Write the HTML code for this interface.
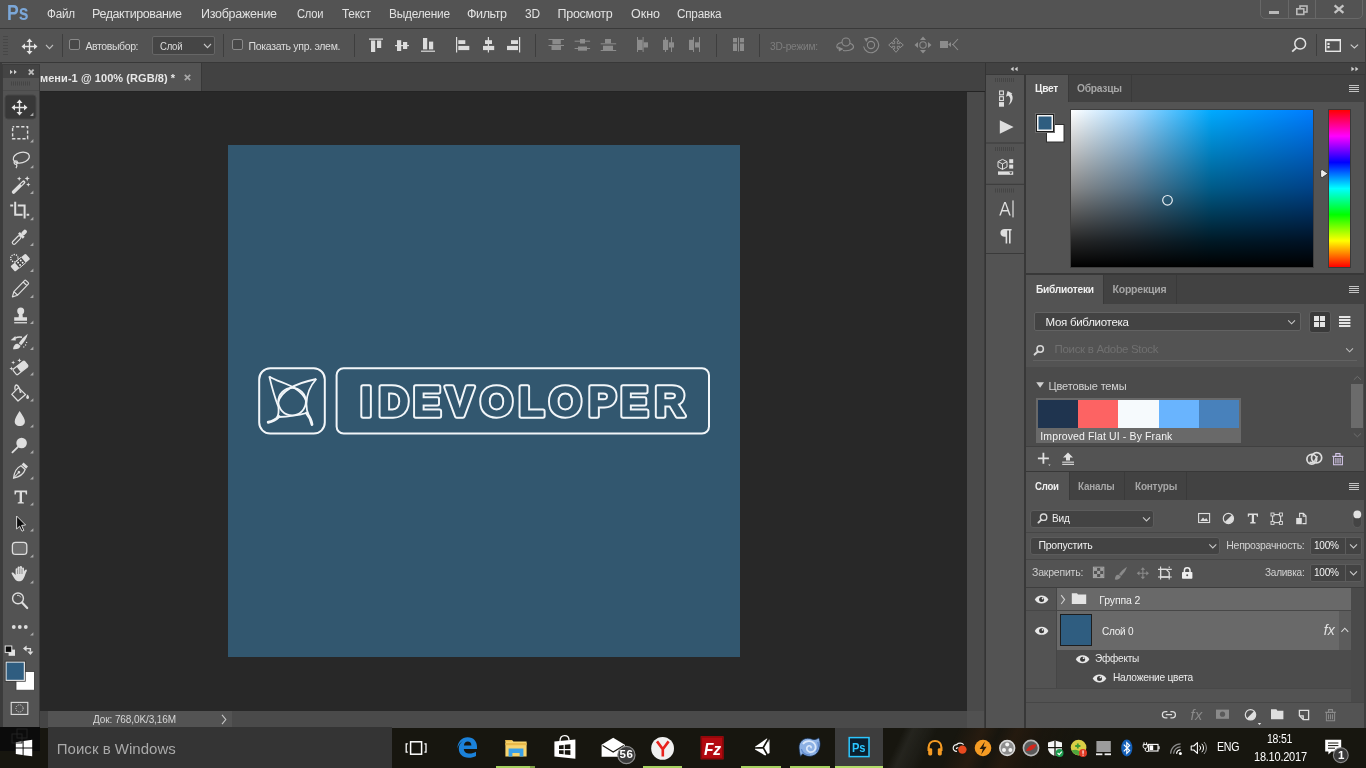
<!DOCTYPE html>
<html lang="ru">
<head>
<meta charset="utf-8">
<title>Photoshop</title>
<style>
*{box-sizing:border-box;margin:0;padding:0}
html,body{width:1366px;height:768px;overflow:hidden;background:#282828}
body{font-family:"Liberation Sans",sans-serif;font-size:11px;color:#dcdcdc;position:relative}
.a{position:absolute}
.t{position:absolute;white-space:nowrap;line-height:1}
svg{position:absolute;overflow:visible}
/* main regions */
#menubar{left:0;top:0;width:1366px;height:29px;background:#535353;border-bottom:1px solid #3a3a3a}
#optbar{left:0;top:29px;width:1366px;height:34px;background:#535353;border-bottom:1px solid #383838}
#tabbar{left:0;top:63px;width:985px;height:29px;background:#424242;border-bottom:1px solid #242424}
#doctab{left:0;top:63px;width:202px;height:28px;background:#535353;border-right:1px solid #383838}
#canvasarea{left:0;top:92px;width:967px;height:619px;background:#282828}
#vscroll{left:967px;top:92px;width:18px;height:619px;background:#4a4a4a}
#statusbar{left:0;top:711px;width:985px;height:17px;background:#4a4a4a}
#statusinfo{left:48px;top:711px;width:184px;height:17px;background:#535353}
#doc{left:228px;top:145px;width:512px;height:512px;background:#32576f}
#toolbox{left:2px;top:64px;width:38px;height:664px;background:#535353;border:1px solid #3c3c3c}
#dockwrap{left:985px;top:63px;width:381px;height:665px;background:#3a3a3a}
#root{position:absolute;left:0;top:0;width:1366px;height:768px;will-change:transform}
#taskbar{left:0;top:728px;width:1366px;height:40px;background:#17160f}
</style>
</head>
<body>
<div id="root">
<div class="a" id="menubar"></div>
<div class="a" id="optbar"></div>
<div class="a" id="tabbar"></div>
<div class="a" id="doctab"></div>
<div class="a" id="canvasarea"></div>
<div class="a" id="doc"></div>
<div class="a" id="vscroll"></div>
<div class="a" id="statusbar"></div>
<div class="a" id="statusinfo"></div>
<div class="a" id="toolbox"></div>
<div class="a" id="dockwrap"></div>
<div class="a" id="taskbar"></div>
<span class="t" style="left:6.5px;top:2px;font-size:22px;color:#7ba7d8;font-weight:bold;transform:scaleX(0.80);transform-origin:0 0;">Ps</span>
<span class="t" style="left:47px;top:8px;font-size:12.5px;color:#e2e2e2;letter-spacing:-0.25px;transform:scaleX(0.9339);transform-origin:0 0;">Файл</span>
<span class="t" style="left:92px;top:8px;font-size:12.5px;color:#e2e2e2;letter-spacing:-0.40px;">Редактирование</span>
<span class="t" style="left:201px;top:8px;font-size:12.5px;color:#e2e2e2;letter-spacing:-0.27px;">Изображение</span>
<span class="t" style="left:297px;top:8px;font-size:12.5px;color:#e2e2e2;letter-spacing:-0.25px;transform:scaleX(0.8939);transform-origin:0 0;">Слои</span>
<span class="t" style="left:342px;top:8px;font-size:12.5px;color:#e2e2e2;letter-spacing:-0.25px;transform:scaleX(0.9517);transform-origin:0 0;">Текст</span>
<span class="t" style="left:388.5px;top:8px;font-size:12.5px;color:#e2e2e2;letter-spacing:-0.25px;transform:scaleX(0.9496);transform-origin:0 0;">Выделение</span>
<span class="t" style="left:467px;top:8px;font-size:12.5px;color:#e2e2e2;letter-spacing:-0.40px;">Фильтр</span>
<span class="t" style="left:525px;top:8px;font-size:12.5px;color:#e2e2e2;letter-spacing:-0.25px;transform:scaleX(0.9536);transform-origin:0 0;">3D</span>
<span class="t" style="left:557.5px;top:8px;font-size:12.5px;color:#e2e2e2;letter-spacing:-0.27px;">Просмотр</span>
<span class="t" style="left:631px;top:8px;font-size:12.5px;color:#e2e2e2;letter-spacing:-0.02px;">Окно</span>
<span class="t" style="left:677px;top:8px;font-size:12.5px;color:#e2e2e2;letter-spacing:-0.25px;transform:scaleX(0.9382);transform-origin:0 0;">Справка</span>
<div class="a" style="left:1260px;top:-2px;width:103px;height:21px;background:transparent;border:1px solid #686868;border-radius:0 0 5px 5px;"></div>
<div class="a" style="left:1288px;top:0px;width:1px;height:18px;background:#686868;"></div>
<div class="a" style="left:1315px;top:0px;width:1px;height:18px;background:#686868;"></div>
<div class="a" style="left:1269px;top:11px;width:10px;height:3px;background:#b9b9b9;"></div>
<svg style="left:1295px;top:4px;" width="14" height="12" viewBox="0 0 14 12"><rect x="5" y="2" width="7" height="6" fill="none" stroke="#b9b9b9" stroke-width="1.6"/><rect x="1.8" y="4.8" width="7" height="5.6" fill="#535353" stroke="#b9b9b9" stroke-width="1.6"/></svg>
<svg style="left:1333px;top:4px;" width="12" height="10" viewBox="0 0 12 10"><path d="M1.6 1.4 L10.4 8.8 M10.4 1.4 L1.6 8.8" stroke="#c4c4c4" stroke-width="2.3" fill="none"/></svg>

<div class="a" style="left:3px;top:36px;width:5px;height:20px;background:transparent;background-image:repeating-linear-gradient(to bottom,#474747 0 1px,transparent 1px 3px);"></div>
<svg style="left:21px;top:38px;" width="17" height="17" viewBox="0 0 17 17"><path d="M8.5 0.5 L11.5 4 H9.2 V7.8 H13 V5.5 L16.5 8.5 L13 11.5 V9.2 H9.2 V13 H11.5 L8.5 16.5 L5.5 13 H7.8 V9.2 H4 V11.5 L0.5 8.5 L4 5.5 V7.8 H7.8 V4 H5.5 Z" fill="#e4e4e4"/></svg>
<svg style="left:45px;top:44px;" width="9" height="6" viewBox="0 0 9 6"><path d="M1 1 L4.5 4.6 L8 1" fill="none" stroke="#bdbdbd" stroke-width="1.1"/></svg>
<div class="a" style="left:62px;top:34px;width:1px;height:23px;background:#3e3e3e;"></div>
<div class="a" style="left:69px;top:39px;width:11px;height:11px;background:#484848;border:1px solid #8a8a8a;border-radius:2px;"></div>
<span class="t" style="left:85.5px;top:41px;font-size:10.5px;color:#dcdcdc;letter-spacing:-0.40px;">Автовыбор:</span>
<div class="a" style="left:152px;top:36px;width:63px;height:19px;background:#454545;border:1px solid #666;border-radius:2px;"></div>
<span class="t" style="left:160px;top:41px;font-size:10.5px;color:#dcdcdc;letter-spacing:-0.25px;transform:scaleX(0.9079);transform-origin:0 0;">Слой</span>
<svg style="left:203px;top:43px;" width="9" height="6" viewBox="0 0 9 6"><path d="M1 1 L4.5 4.6 L8 1" fill="none" stroke="#c8c8c8" stroke-width="1.1"/></svg>
<div class="a" style="left:223px;top:34px;width:1px;height:23px;background:#3e3e3e;"></div>
<div class="a" style="left:232px;top:39px;width:11px;height:11px;background:#484848;border:1px solid #8a8a8a;border-radius:2px;"></div>
<span class="t" style="left:248.5px;top:41px;font-size:10.5px;color:#dcdcdc;letter-spacing:-0.30px;">Показать упр. элем.</span>
<div class="a" style="left:354px;top:34px;width:1px;height:23px;background:#3e3e3e;"></div>
<svg style="left:0px;top:0px;" width="1366" height="64" viewBox="0 0 1366 64"><rect x="369" y="38.5" width="14" height="1.2" fill="#dcdcdc"/><rect x="371" y="40.5" width="4.2" height="11.5" fill="#dcdcdc"/><rect x="377" y="40.5" width="4.2" height="7.5" fill="#dcdcdc"/><rect x="395" y="45" width="14" height="1.2" fill="#dcdcdc"/><rect x="397" y="40.2" width="4.2" height="10.8" fill="#dcdcdc"/><rect x="403" y="42" width="4.2" height="7" fill="#dcdcdc"/><rect x="421" y="50.6" width="14" height="1.2" fill="#dcdcdc"/><rect x="423" y="38" width="4.2" height="11.4" fill="#dcdcdc"/><rect x="429" y="41.6" width="4.2" height="7.8" fill="#dcdcdc"/><rect x="456" y="37" width="1.2" height="15.5" fill="#dcdcdc"/><rect x="458.3" y="40.2" width="7" height="3.8" fill="#dcdcdc"/><rect x="458.3" y="45.9" width="11" height="4.2" fill="#dcdcdc"/><rect x="487.8" y="37" width="1.2" height="15.5" fill="#dcdcdc"/><rect x="485" y="40.2" width="7" height="3.8" fill="#dcdcdc"/><rect x="483" y="45.9" width="11.2" height="4.2" fill="#dcdcdc"/><rect x="519" y="37" width="1.2" height="15.5" fill="#dcdcdc"/><rect x="511" y="40.2" width="7" height="3.8" fill="#dcdcdc"/><rect x="507" y="45.9" width="11" height="4.2" fill="#dcdcdc"/><rect x="548.5" y="39" width="15.5" height="1" fill="#8c8c8c"/><rect x="548.5" y="45" width="15.5" height="1" fill="#8c8c8c"/><rect x="552.4" y="40" width="8.4" height="4.3" fill="#8c8c8c"/><rect x="551.5" y="46" width="9.5" height="4" fill="#8c8c8c"/><rect x="574.6" y="40.7" width="15.5" height="1" fill="#8c8c8c"/><rect x="574.6" y="48" width="15.5" height="1" fill="#8c8c8c"/><rect x="580" y="39" width="5" height="4.5" fill="#8c8c8c"/><rect x="578" y="46.5" width="9" height="4.2" fill="#8c8c8c"/><rect x="600.7" y="43.3" width="15.5" height="1" fill="#8c8c8c"/><rect x="600.7" y="50" width="15.5" height="1" fill="#8c8c8c"/><rect x="605" y="39" width="6" height="4.3" fill="#8c8c8c"/><rect x="603" y="45.7" width="10" height="4.3" fill="#8c8c8c"/><rect x="637" y="37" width="1" height="15" fill="#8c8c8c"/><rect x="642.6" y="37" width="1" height="15" fill="#8c8c8c"/><rect x="638" y="39.8" width="4.6" height="10.2" fill="#8c8c8c"/><rect x="643.6" y="42.3" width="4.4" height="5.2" fill="#8c8c8c"/><rect x="665" y="37" width="1" height="15" fill="#8c8c8c"/><rect x="671" y="37" width="1" height="15" fill="#8c8c8c"/><rect x="663" y="39.8" width="5.2" height="10.2" fill="#8c8c8c"/><rect x="669" y="42.3" width="5" height="5.2" fill="#8c8c8c"/><rect x="693" y="37" width="1" height="15" fill="#8c8c8c"/><rect x="699" y="37" width="1" height="15" fill="#8c8c8c"/><rect x="689" y="39.8" width="4.2" height="10.2" fill="#8c8c8c"/><rect x="695" y="42.3" width="4" height="5.2" fill="#8c8c8c"/><rect x="738" y="37.5" width="1" height="14" fill="#8c8c8c"/><rect x="733" y="38" width="4" height="4.3" fill="#8c8c8c"/><rect x="733" y="43.5" width="4" height="7.5" fill="#8c8c8c"/><rect x="740" y="38" width="4" height="4.3" fill="#8c8c8c"/><rect x="740" y="43.5" width="4" height="7.5" fill="#8c8c8c"/></svg>
<div class="a" style="left:535px;top:34px;width:1px;height:23px;background:#3e3e3e;"></div>
<div class="a" style="left:716px;top:34px;width:1px;height:23px;background:#3e3e3e;"></div>
<div class="a" style="left:759px;top:34px;width:1px;height:23px;background:#3e3e3e;"></div>
<span class="t" style="left:770px;top:41px;font-size:10.5px;color:#7e7e7e;letter-spacing:-0.25px;transform:scaleX(0.9696);transform-origin:0 0;">3D-режим:</span>
<svg style="left:835px;top:37px;" width="20" height="15" viewBox="0 0 20 15"><circle cx="11" cy="5" r="4" fill="none" stroke="#8c8c8c" stroke-width="1.1"/><path d="M7 5.5 C2 6 0.5 9 3 11.5 M8 13.5 C13 14.5 19 12.5 18.5 9.5 C18.3 8 17 7 15 6.3" fill="none" stroke="#8c8c8c" stroke-width="1.1"/><path d="M3 9.5 L8.5 12 L4 14.5 Z" fill="#8c8c8c"/></svg>
<svg style="left:862px;top:36px;" width="18" height="18" viewBox="0 0 18 18"><circle cx="9" cy="9" r="3.6" fill="none" stroke="#8c8c8c" stroke-width="1.1"/><path d="M4.5 3 A7.6 7.6 0 1 1 1.6 10.5" fill="none" stroke="#8c8c8c" stroke-width="1.1"/><path d="M2 2.2 L6.2 2.2 L4.4 6 Z" fill="#8c8c8c"/></svg>
<svg style="left:888px;top:37px;" width="16" height="16" viewBox="0 0 16 16"><path d="M8 0.7 L11 4.2 H9.3 V6.7 H11.8 V5 L15.3 8 L11.8 11 V9.3 H9.3 V11.8 H11 L8 15.3 L5 11.8 H6.7 V9.3 H4.2 V11 L0.7 8 L4.2 5 V6.7 H6.7 V4.2 H5 Z" fill="none" stroke="#8c8c8c" stroke-width="1"/></svg>
<svg style="left:914px;top:36px;" width="18" height="18" viewBox="0 0 18 18"><circle cx="9" cy="9" r="3.2" fill="none" stroke="#8c8c8c" stroke-width="1.1"/><path d="M9 0.5 L12 4 H6 Z M9 17.5 L12 14 H6 Z M0.5 9 L4 6 V12 Z M17.5 9 L14 6 V12 Z" fill="#8c8c8c"/></svg>
<svg style="left:940px;top:38px;" width="19" height="14" viewBox="0 0 19 14"><rect x="0" y="3" width="8" height="7" fill="#8c8c8c"/><path d="M8 6.5 L11 4 V9 Z" fill="#8c8c8c"/><path d="M18 1 L13 6.5 L18 12 M13 6.5 H12" fill="none" stroke="#8c8c8c" stroke-width="1.1"/></svg>
<svg style="left:1291px;top:37px;" width="17" height="17" viewBox="0 0 17 17"><circle cx="9.2" cy="6.7" r="5.4" fill="none" stroke="#e2e2e2" stroke-width="1.5"/><path d="M5.3 10.8 L1.2 14.6" stroke="#e2e2e2" stroke-width="1.8" fill="none"/></svg>
<div class="a" style="left:1316px;top:34px;width:1px;height:22px;background:#3e3e3e;"></div>
<svg style="left:1325px;top:39px;" width="16" height="13" viewBox="0 0 16 13"><rect x="0.7" y="0.7" width="14.6" height="11.6" fill="none" stroke="#e6e6e6" stroke-width="1.4"/><rect x="0" y="0" width="16" height="2.2" fill="#e6e6e6"/><rect x="2.4" y="3.8" width="2.2" height="2.2" fill="#e6e6e6"/><rect x="2.4" y="7" width="2.2" height="2.2" fill="#e6e6e6"/></svg>
<svg style="left:1350px;top:44px;" width="9" height="5" viewBox="0 0 9 5"><path d="M0.7 0.6 L4.4 4 L8.1 0.6" fill="none" stroke="#cfcfcf" stroke-width="1.1"/></svg>

<span class="t" style="left:40px;top:73px;font-size:11px;color:#e8e8e8;font-weight:bold;letter-spacing:0.06px;">мени-1 @ 100% (RGB/8) *</span>
<svg style="left:184px;top:74px;" width="7" height="7" viewBox="0 0 7 7"><path d="M0.8 0.8 L6.2 6.2 M6.2 0.8 L0.8 6.2" stroke="#a8a8a8" stroke-width="1.7" fill="none"/></svg>
<span class="t" style="left:93px;top:715px;font-size:10px;color:#d6d6d6;letter-spacing:-0.10px;">Док: 768,0K/3,16M</span>
<svg style="left:221px;top:714px;" width="6" height="11" viewBox="0 0 6 11"><path d="M1 0.8 L4.8 5.5 L1 10.2" fill="none" stroke="#c8c8c8" stroke-width="1.1"/></svg>
<div class="a" style="left:40px;top:711px;width:8px;height:17px;background:#454545;"></div>
<div class="a" style="left:967px;top:711px;width:17px;height:17px;background:#515151;"></div>
<div class="a" style="left:984px;top:92px;width:1px;height:636px;background:#3c3c3c;"></div>

<svg style="left:0px;top:0px;" width="1366" height="768" viewBox="0 0 1366 768"><rect x="259.2" y="368.2" width="65.6" height="65.4" rx="11" fill="none" stroke="#f2f6f9" stroke-width="2"/><rect x="336.6" y="368.2" width="372.4" height="65.4" rx="7" fill="none" stroke="#f2f6f9" stroke-width="2"/><g fill="none" stroke="#f2f6f9" stroke-width="1.8" stroke-linejoin="miter"><circle cx="292.1" cy="401.6" r="13.8"/><path d="M269.3 376.4 C280 383.5 300 385 306.3 401"/><path d="M316.3 379 C302 382 282 388 278.3 402"/><path d="M269.3 376.4 C272 388 275 398 278.4 407 C279 412 278.6 415 277 417.5"/><path d="M316.3 379 C310 386 306.5 396 306.4 404 C306.4 409 307.2 412 308.5 414.5"/><path d="M278.5 417 C288 416.8 298 415.5 306.5 413"/></g><path d="M268.3 422.3 C272.5 421.5 276 419.5 279 416.5" fill="none" stroke="#f2f6f9" stroke-width="3" stroke-linecap="round"/><path d="M306.5 413 C309.5 416.5 311.3 420.5 312 424.5" fill="none" stroke="#f2f6f9" stroke-width="2.8" stroke-linecap="round"/><g font-family="Liberation Sans, sans-serif" font-weight="bold" font-size="42" text-anchor="middle" stroke-linejoin="round"><g fill="#f2f6f9" stroke="#f2f6f9" stroke-width="5.4"><text x="366.2" y="415.5">I</text><text x="393.65" y="415.5">D</text><text x="427" y="415.5">E</text><text x="459.8" y="415.5">V</text><text x="496.5" y="415.5">O</text><text x="531.4" y="415.5">L</text><text x="565.4" y="415.5">O</text><text x="602.2" y="415.5">P</text><text x="634.2" y="415.5">E</text><text x="670" y="415.5">R</text></g><g fill="#32576f" stroke="#32576f" stroke-width="1.5"><text x="366.2" y="415.5">I</text><text x="393.65" y="415.5">D</text><text x="427" y="415.5">E</text><text x="459.8" y="415.5">V</text><text x="496.5" y="415.5">O</text><text x="531.4" y="415.5">L</text><text x="565.4" y="415.5">O</text><text x="602.2" y="415.5">P</text><text x="634.2" y="415.5">E</text><text x="670" y="415.5">R</text></g></g></svg>

<div class="a" style="left:0px;top:63px;width:2px;height:665px;background:#3b3b3b;"></div>
<div class="a" style="left:3px;top:65px;width:36px;height:13px;background:#444444;"></div>
<svg style="left:0px;top:0px;" width="1366" height="768" viewBox="0 0 1366 768"><path d="M10 69.8 L12.8 72 L10 74.2 Z M14 69.8 L16.8 72 L14 74.2 Z" fill="#cfcfcf"/><path d="M28.8 69.6 L33.6 74.6 M33.6 69.6 L28.8 74.6" stroke="#bdbdbd" stroke-width="1.8" fill="none"/><rect x="11" y="81.5" width="1" height="4" fill="#454545"/><rect x="13" y="81.5" width="1" height="4" fill="#454545"/><rect x="15" y="81.5" width="1" height="4" fill="#454545"/><rect x="17" y="81.5" width="1" height="4" fill="#454545"/><rect x="19" y="81.5" width="1" height="4" fill="#454545"/><rect x="21" y="81.5" width="1" height="4" fill="#454545"/><rect x="23" y="81.5" width="1" height="4" fill="#454545"/><rect x="25" y="81.5" width="1" height="4" fill="#454545"/><rect x="27" y="81.5" width="1" height="4" fill="#454545"/><rect x="29" y="81.5" width="1" height="4" fill="#454545"/><rect x="3" y="90" width="36" height="1" fill="#4b4b4b"/><rect x="5" y="95" width="31" height="24" rx="3" fill="#383838" stroke="#464646" stroke-width="1"/><path transform="translate(11,99)" d="M8.5 0.5 L11.5 4 H9.2 V7.8 H13 V5.5 L16.5 8.5 L13 11.5 V9.2 H9.2 V13 H11.5 L8.5 16.5 L5.5 13 H7.8 V9.2 H4 V11.5 L0.5 8.5 L4 5.5 V7.8 H7.8 V4 H5.5 Z" fill="#e6e6e6"/><path d="M33.4 112.6 L33.4 116 L30.0 116 Z" fill="#a9a9a9"/><rect x="12.6" y="126.7" width="15" height="12" fill="none" stroke="#dedede" stroke-width="1.4" stroke-dasharray="3.2 1.9" stroke-dashoffset="1.6"/><path d="M33.4 139.0 L33.4 142.4 L30.0 142.4 Z" fill="#a9a9a9"/><g fill="none" stroke="#dedede" stroke-width="1.3"><ellipse cx="21.3" cy="157.6" rx="8.2" ry="5.2" transform="rotate(-14 21.3 157.6)"/><circle cx="15.8" cy="162.6" r="1.7"/><path d="M16.3 164.2 C17.2 165.5 17 167 16 168.2"/></g><path d="M33.4 164.9 L33.4 168.3 L30.0 168.3 Z" fill="#a9a9a9"/><path d="M13.6 192 L23.6 182.2" stroke="#dedede" stroke-width="3.6" stroke-linecap="round" fill="none"/><path d="M21.3 184.5 L23.2 182.6" stroke="#555" stroke-width="1.2" stroke-linecap="round"/><path d="M19.2 176.39999999999998 L19.843999999999998 178.05599999999998 L21.5 178.7 L19.843999999999998 179.344 L19.2 181.0 L18.556 179.344 L16.9 178.7 L18.556 178.05599999999998 Z" fill="#dedede"/><path d="M27.2 176.0 L27.928 177.87199999999999 L29.8 178.6 L27.928 179.328 L27.2 181.2 L26.471999999999998 179.328 L24.599999999999998 178.6 L26.471999999999998 177.87199999999999 Z" fill="#dedede"/><path d="M28.3 182.4 L28.916 183.98399999999998 L30.5 184.6 L28.916 185.216 L28.3 186.79999999999998 L27.684 185.216 L26.1 184.6 L27.684 183.98399999999998 Z" fill="#dedede"/><path d="M33.4 190.6 L33.4 194 L30.0 194 Z" fill="#a9a9a9"/><g fill="none" stroke="#dedede" stroke-width="2"><path d="M10.2 205.6 H13.2 M15.2 201.8 V214.8 H22.6"/><path d="M17.8 205.6 H24.6 V218.4 M26.6 214.8 H29.2"/></g><path d="M33.4 216.79999999999998 L33.4 220.2 L30.0 220.2 Z" fill="#a9a9a9"/><g transform="rotate(45 19.5 237)"><rect x="17.9" y="236" width="3.4" height="10.5" rx="1.6" fill="none" stroke="#dedede" stroke-width="1.2"/><rect x="16.2" y="233.2" width="6.8" height="2.6" fill="#dedede"/><rect x="17.6" y="227.5" width="4" height="6" rx="1.8" fill="#dedede"/></g><path d="M33.4 242.6 L33.4 246 L30.0 246 Z" fill="#a9a9a9"/><g transform="rotate(-40 20.3 262.6)"><rect x="10.4" y="259" width="19.8" height="7.2" rx="1.2" fill="#dedede"/><rect x="16.2" y="259" width="8.2" height="7.2" fill="#4a4a4a"/><path d="M16.2 259 H24.4 M16.2 266.2 H24.4" stroke="#dedede" stroke-width="0.9"/><circle cx="18.6" cy="261.2" r="0.95" fill="#f4f4f4"/><circle cx="22" cy="261.2" r="0.95" fill="#f4f4f4"/><circle cx="18.6" cy="264.2" r="0.95" fill="#f4f4f4"/><circle cx="22" cy="264.2" r="0.95" fill="#f4f4f4"/></g><circle cx="14.4" cy="258.2" r="3.7" fill="none" stroke="#f0f0f0" stroke-width="1.3" stroke-dasharray="1.2 1.12"/><path d="M33.4 268.6 L33.4 272 L30.0 272 Z" fill="#a9a9a9"/><g transform="rotate(-46 19.7 289.3)"><path d="M9.2 289.3 L14 286.7 H29.3 Q30.4 286.7 30.4 287.8 V290.8 Q30.4 291.9 29.3 291.9 H14 Z M14 286.7 V291.9 M27.4 286.7 V291.9" fill="none" stroke="#dedede" stroke-width="1.2" stroke-linejoin="round"/></g><path d="M33.4 294.6 L33.4 298 L30.0 298 Z" fill="#a9a9a9"/><circle cx="20.7" cy="311" r="3.5" fill="#dedede"/><path d="M19 313 H22.4 L22.8 317.3 H27 V320.8 H14.2 V317.3 H18.6 Z" fill="#dedede"/><rect x="14.2" y="322.1" width="12.8" height="1.3" fill="#dedede"/><path d="M33.4 320.6 L33.4 324 L30.0 324 Z" fill="#a9a9a9"/><path d="M27.8 333.8 C24 336.6 21 340 18.8 343.2 L21.2 345.2 C24 342 26.8 338.4 27.8 333.8 Z" fill="#dedede"/><path d="M18.2 344 C15.6 343.2 13.6 345.2 13 349.2 C16.6 349.8 20 348.6 20.6 345.8 Z" fill="#dedede"/><path d="M10.6 340.2 L15.4 336 L15.8 340.4 Z" fill="#dedede"/><path d="M15 338.2 C17.4 337 20 336.8 22 337.2" fill="none" stroke="#dedede" stroke-width="1.4"/><circle cx="26.6" cy="342.4" r="0.7" fill="#dedede"/><circle cx="25.6" cy="345" r="0.7" fill="#dedede"/><circle cx="23.8" cy="347" r="0.7" fill="#dedede"/><path d="M33.4 346.6 L33.4 350 L30.0 350 Z" fill="#a9a9a9"/><g transform="rotate(-38 20.5 368)"><rect x="13.2" y="364.4" width="14.6" height="7" rx="1.2" fill="none" stroke="#dedede" stroke-width="1.2"/><rect x="18.2" y="364.4" width="9.6" height="7" rx="1.2" fill="#dedede"/></g><path d="M13.2 360.4 L13.788 361.912 L15.299999999999999 362.5 L13.788 363.088 L13.2 364.6 L12.611999999999998 363.088 L11.1 362.5 L12.611999999999998 361.912 Z" fill="#dedede"/><path d="M19.4 358.29999999999995 L19.988 359.81199999999995 L21.5 360.4 L19.988 360.988 L19.4 362.5 L18.811999999999998 360.988 L17.299999999999997 360.4 L18.811999999999998 359.81199999999995 Z" fill="#dedede"/><path d="M11.4 366.6 L11.96 368.04 L13.4 368.6 L11.96 369.16 L11.4 370.6 L10.84 369.16 L9.4 368.6 L10.84 368.04 Z" fill="#dedede"/><path d="M33.4 372.0 L33.4 375.4 L30.0 375.4 Z" fill="#a9a9a9"/><g fill="none" stroke="#dedede" stroke-width="1.3"><path d="M18.4 387.6 L25.6 394.6 L18 401 L11.8 394.4 Z" stroke-linejoin="round"/><path d="M15.2 390 C14.4 387.4 15.2 385 16.4 385 C17.6 385 19.4 388 20.4 391.6"/></g><circle cx="20.5" cy="392" r="1.1" fill="#dedede"/><path d="M27.6 394.6 C29.4 396.8 29.6 398.8 27.6 399 C25.6 398.8 25.8 396.8 27.6 394.6 Z" fill="#dedede"/><path d="M33.4 398.20000000000005 L33.4 401.6 L30.0 401.6 Z" fill="#a9a9a9"/><path d="M19.6 411 C22.4 415.4 24.9 418.6 24.9 421.4 C24.9 424.2 22.6 426 19.8 426 C17 426 14.7 424.2 14.7 421.4 C14.7 418.6 17 415.4 19.6 411 Z" fill="#dedede"/><path d="M33.4 424.20000000000005 L33.4 427.6 L30.0 427.6 Z" fill="#a9a9a9"/><circle cx="21.6" cy="443" r="5.3" fill="#dedede"/><path d="M18 446.8 L12.4 452.4" stroke="#dedede" stroke-width="1.8" stroke-linecap="round"/><path d="M33.4 450.0 L33.4 453.4 L30.0 453.4 Z" fill="#a9a9a9"/><g transform="rotate(42 20 471)"><path d="M17 462.4 H23 V465.2 H17 Z" fill="#dedede"/><path d="M17.2 466.4 H22.8 C24.6 470.6 23.6 475.6 20 480.6 C16.4 475.6 15.4 470.6 17.2 466.4 Z" fill="none" stroke="#dedede" stroke-width="1.2"/><path d="M20 480 V473.4" stroke="#dedede" stroke-width="1"/><circle cx="20" cy="472.6" r="1.3" fill="#dedede"/></g><path d="M33.4 476.20000000000005 L33.4 479.6 L30.0 479.6 Z" fill="#a9a9a9"/><path transform="translate(1.1,0)" d="M13.4 490.6 H26 V494.6 H24.8 L24.2 492.2 H20.9 V502 L22.8 502.4 V503.6 H16.6 V502.4 L18.5 502 V492.2 H15.2 L14.6 494.6 H13.4 Z" fill="#dedede"/><path d="M33.4 502.20000000000005 L33.4 505.6 L30.0 505.6 Z" fill="#a9a9a9"/><path d="M16.6 516 L16.6 529 L19.6 526.2 L22 531.2 L23.8 530.4 L21.6 525.4 L25.6 525 Z" fill="#0e0e0e" stroke="#d9d9d9" stroke-width="1" stroke-linejoin="round"/><path d="M33.4 528.2 L33.4 531.6 L30.0 531.6 Z" fill="#a9a9a9"/><rect x="12.4" y="542.4" width="14.4" height="12" rx="3.2" fill="#6e6e6e" stroke="#dedede" stroke-width="1.3"/><path d="M33.4 554.2 L33.4 557.6 L30.0 557.6 Z" fill="#a9a9a9"/><path d="M15.6 575 V569.4 Q15.6 568.2 16.6 568.2 Q17.6 568.2 17.6 569.4 V567.6 Q17.6 566.4 18.7 566.4 Q19.8 566.4 19.8 567.6 V567.2 Q19.8 566 20.9 566 Q22 566 22 567.2 V568.6 Q22 567.6 23 567.6 Q24 567.6 24 568.8 V571.6 C24.8 570 25.8 569.2 26.6 569.8 C27.2 570.4 26.6 571.4 26 572.6 C25 574.8 24.6 577.6 22.6 580 C21 581.8 17.2 581.8 15.6 580 C13.6 577.6 12.6 575.6 11.6 573.6 C11.2 572.6 12.4 572 13.4 572.8 Z" fill="#dedede"/><path d="M17.6 569.4 V574 M19.8 567.6 V574 M22 568.6 V574" stroke="#6a6a6a" stroke-width="0.7" fill="none"/><path d="M33.4 580.2 L33.4 583.6 L30.0 583.6 Z" fill="#a9a9a9"/><circle cx="18" cy="598.4" r="5.4" fill="none" stroke="#dedede" stroke-width="1.4"/><path d="M22 602.6 L27.2 608" stroke="#dedede" stroke-width="2.2" stroke-linecap="round"/><path d="M17 595.4 C18.6 595 20.2 595.8 20.8 597.4" fill="none" stroke="#dedede" stroke-width="0.9"/><circle cx="13.8" cy="627" r="1.9" fill="#dedede"/><circle cx="19.8" cy="627" r="1.9" fill="#dedede"/><circle cx="25.8" cy="627" r="1.9" fill="#dedede"/><path d="M33.4 632.2 L33.4 635.6 L30.0 635.6 Z" fill="#a9a9a9"/><rect x="8.6" y="649.6" width="6.4" height="6.2" fill="#e4e4e4"/><rect x="5.2" y="646" width="6.6" height="6.4" fill="#0c0c0c" stroke="#e4e4e4" stroke-width="1"/><path d="M26 648.6 H30.4 V651.6" fill="none" stroke="#dedede" stroke-width="1.4"/><path d="M23 648.6 L26.6 645.6 V651.6 Z M30.4 655 L27.4 651.4 H33.4 Z" fill="#dedede"/><rect x="16" y="671.6" width="18.4" height="18.6" fill="#ffffff" stroke="#3c3c3c" stroke-width="0.8"/><rect x="6" y="662" width="18.4" height="18.4" fill="#2f5d80" stroke="#f0f0f0" stroke-width="1.2"/><rect x="5.1" y="661.1" width="20.2" height="20.2" fill="none" stroke="#3a3a3a" stroke-width="0.8"/><rect x="11.2" y="702.4" width="16.6" height="12" fill="none" stroke="#dedede" stroke-width="1.1"/><circle cx="19.5" cy="708.4" r="3.6" fill="none" stroke="#dedede" stroke-width="1" stroke-dasharray="1 1.1"/></svg>

<div class="a" style="left:985px;top:63px;width:381px;height:11px;background:#424242;"></div>
<div class="a" style="left:985px;top:74px;width:381px;height:1px;background:#383838;"></div>
<div class="a" style="left:985px;top:63px;width:1px;height:665px;background:#343434;"></div>
<div class="a" style="left:986px;top:75px;width:38px;height:653px;background:#535353;"></div>
<div class="a" style="left:1024px;top:75px;width:2px;height:653px;background:#383838;"></div>
<svg style="left:0px;top:0px;" width="1366" height="768" viewBox="0 0 1366 768"><path d="M1013.6 66.8 L1010.6 69 L1013.6 71.2 Z M1017.6 66.8 L1014.6 69 L1017.6 71.2 Z" fill="#d0d0d0"/><path d="M1351.4 66.8 L1354.4 69 L1351.4 71.2 Z M1355.4 66.8 L1358.4 69 L1355.4 71.2 Z" fill="#d0d0d0"/><rect x="995" y="78" width="1" height="4" fill="#454545"/><rect x="997" y="78" width="1" height="4" fill="#454545"/><rect x="999" y="78" width="1" height="4" fill="#454545"/><rect x="1001" y="78" width="1" height="4" fill="#454545"/><rect x="1003" y="78" width="1" height="4" fill="#454545"/><rect x="1005" y="78" width="1" height="4" fill="#454545"/><rect x="1007" y="78" width="1" height="4" fill="#454545"/><rect x="1009" y="78" width="1" height="4" fill="#454545"/><rect x="1011" y="78" width="1" height="4" fill="#454545"/><rect x="1013" y="78" width="1" height="4" fill="#454545"/><rect x="999.6" y="91" width="3.8" height="3.8" fill="none" stroke="#dedede" stroke-width="1.1"/><rect x="999.6" y="96.7" width="3.8" height="3.8" fill="none" stroke="#dedede" stroke-width="1.1"/><rect x="999" y="102.1" width="5" height="4.6" fill="#dedede"/><path d="M1009.6 92.4 C1013.8 95 1014 101 1008.4 105.2 C1011 101 1011 97.4 1008.2 95.4 Z" fill="#dedede"/><path d="M1006 96.8 L1007.6 91 L1012.4 93.4 Z" fill="#dedede"/><path d="M999.8 120.2 L1013.6 127 L999.8 133.8 Z" fill="#dedede"/><rect x="986" y="142.5" width="38" height="1" fill="#3a3a3a"/><rect x="995" y="147" width="1" height="4" fill="#454545"/><rect x="997" y="147" width="1" height="4" fill="#454545"/><rect x="999" y="147" width="1" height="4" fill="#454545"/><rect x="1001" y="147" width="1" height="4" fill="#454545"/><rect x="1003" y="147" width="1" height="4" fill="#454545"/><rect x="1005" y="147" width="1" height="4" fill="#454545"/><rect x="1007" y="147" width="1" height="4" fill="#454545"/><rect x="1009" y="147" width="1" height="4" fill="#454545"/><rect x="1011" y="147" width="1" height="4" fill="#454545"/><rect x="1013" y="147" width="1" height="4" fill="#454545"/><path d="M1002.5 159.4 L1007 161.6 V167 L1002.5 169.4 L998 167 V161.6 Z M998 161.6 L1002.5 163.9 L1007 161.6 M1002.5 163.9 V169.4" fill="none" stroke="#dedede" stroke-width="1"/><rect x="1009.2" y="159.2" width="4" height="4" fill="#dedede"/><rect x="1009.2" y="164.6" width="4" height="4" fill="#dedede"/><rect x="998" y="171.4" width="15.2" height="3.4" fill="#dedede"/><path d="M1009.2 172.2 H1012.4 L1010.8 174.2 Z" fill="#444"/><rect x="986" y="183.8" width="38" height="1" fill="#3a3a3a"/><rect x="995" y="188.5" width="1" height="4" fill="#454545"/><rect x="997" y="188.5" width="1" height="4" fill="#454545"/><rect x="999" y="188.5" width="1" height="4" fill="#454545"/><rect x="1001" y="188.5" width="1" height="4" fill="#454545"/><rect x="1003" y="188.5" width="1" height="4" fill="#454545"/><rect x="1005" y="188.5" width="1" height="4" fill="#454545"/><rect x="1007" y="188.5" width="1" height="4" fill="#454545"/><rect x="1009" y="188.5" width="1" height="4" fill="#454545"/><rect x="1011" y="188.5" width="1" height="4" fill="#454545"/><rect x="1013" y="188.5" width="1" height="4" fill="#454545"/><path d="M999.2 215.4 L1004.2 202 H1005.8 L1010.8 215.4 H1009.2 L1007.8 211.4 H1002.2 L1000.8 215.4 Z M1002.7 210 H1007.3 L1005 203.6 Z" fill="#dedede"/><rect x="1012.4" y="200.4" width="1.2" height="17" fill="#dedede"/><path d="M1004.6 229 H1011.6 V230.4 H1010.6 V243.6 H1009 V230.4 H1007.2 V243.6 H1005.6 V236.8 H1004.6 C1002.2 236.8 1000.4 235.2 1000.4 232.9 C1000.4 230.6 1002.2 229 1004.6 229 Z" fill="#dedede"/><rect x="986" y="253" width="38" height="1" fill="#3a3a3a"/></svg>

<div class="a" style="left:1026px;top:75px;width:340px;height:198px;background:#535353;"></div>
<div class="a" style="left:1026px;top:75px;width:340px;height:27px;background:#424242;"></div>
<div class="a" style="left:1026px;top:75px;width:42px;height:27px;background:#535353;"></div>
<div class="a" style="left:1068px;top:75px;width:1px;height:27px;background:#3a3a3a;"></div>
<div class="a" style="left:1131px;top:75px;width:1px;height:27px;background:#3a3a3a;"></div>
<span class="t" style="left:1035.2px;top:83px;font-size:10.5px;color:#f0f0f0;font-weight:bold;letter-spacing:-0.25px;transform:scaleX(0.9676);transform-origin:0 0;">Цвет</span>
<span class="t" style="left:1077px;top:83px;font-size:10.5px;color:#a6a6a6;font-weight:bold;letter-spacing:-0.25px;transform:scaleX(0.9745);transform-origin:0 0;">Образцы</span>
<div class="a" style="left:1071px;top:110px;width:242px;height:157px;background:#0090ff;background:linear-gradient(to top,#000 0%,rgba(0,0,0,.86) 16%,rgba(0,0,0,.47) 50%,rgba(0,0,0,0) 100%),linear-gradient(to right,#fff 0%,#a3d8ff 26%,#00aaff 58%,#007cff 100%);outline:1px solid #3e3e3e;"></div>
<div class="a" style="left:1329px;top:110px;width:21px;height:157px;background:#f00;background:linear-gradient(to bottom,#ff0000 0%,#ff00ff 16.66%,#0000ff 33.33%,#00ffff 50%,#00ff00 66.66%,#ffff00 83.33%,#ff0000 100%);outline:1px solid #3a3a3a;"></div>
<svg style="left:0px;top:0px;" width="1366" height="768" viewBox="0 0 1366 768"><rect x="1349" y="85" width="10" height="1" fill="#c4c4c4"/><rect x="1349" y="87" width="10" height="1" fill="#c4c4c4"/><rect x="1349" y="89" width="10" height="1" fill="#c4c4c4"/><rect x="1349" y="91" width="10" height="1" fill="#c4c4c4"/><rect x="1046.5" y="124.5" width="17.5" height="17.5" fill="#ffffff" stroke="#2e2e2e" stroke-width="1"/><rect x="1035" y="113" width="20" height="20" fill="#6d6d6d"/><rect x="1036" y="114" width="18" height="18" fill="#1e1e1e"/><rect x="1037" y="115" width="16" height="16" fill="#f4f4f4"/><rect x="1038.5" y="116.5" width="13" height="13" fill="#2f5d80"/><circle cx="1167.5" cy="200.3" r="4.8" fill="none" stroke="#e8eef2" stroke-width="1.2"/><path d="M1322.2 169.6 L1328 173.6 L1322.2 177.6 Q1320.6 177.6 1320.6 176 V171.2 Q1320.6 169.6 1322.2 169.6 Z" fill="#ececec" stroke="#2a2a2a" stroke-width="0.8"/></svg>

<div class="a" style="left:1026px;top:273px;width:340px;height:2px;background:#383838;"></div>
<div class="a" style="left:1026px;top:275px;width:340px;height:92px;background:#535353;"></div>
<div class="a" style="left:1026px;top:367px;width:340px;height:79px;background:#4b4b4b;"></div>
<div class="a" style="left:1026px;top:446px;width:340px;height:25px;background:#535353;"></div>
<div class="a" style="left:1026px;top:445.5px;width:340px;height:1px;background:#404040;"></div>
<div class="a" style="left:1026px;top:471px;width:340px;height:1px;background:#383838;"></div>
<div class="a" style="left:1026px;top:275px;width:340px;height:29px;background:#424242;"></div>
<div class="a" style="left:1026px;top:275px;width:77px;height:29px;background:#535353;"></div>
<div class="a" style="left:1103px;top:275px;width:1px;height:29px;background:#3a3a3a;"></div>
<div class="a" style="left:1176px;top:275px;width:1px;height:29px;background:#3a3a3a;"></div>
<span class="t" style="left:1035.5px;top:284px;font-size:10.5px;color:#f0f0f0;font-weight:bold;letter-spacing:-0.25px;transform:scaleX(0.9675);transform-origin:0 0;">Библиотеки</span>
<span class="t" style="left:1112.5px;top:284px;font-size:10.5px;color:#a6a6a6;font-weight:bold;letter-spacing:-0.22px;">Коррекция</span>
<div class="a" style="left:1034px;top:312px;width:267px;height:19px;background:#434343;border:1px solid #626262;border-radius:2px;"></div>
<span class="t" style="left:1045.5px;top:317px;font-size:11.5px;color:#f2f2f2;letter-spacing:-0.28px;">Моя библиотека</span>
<div class="a" style="left:1308.5px;top:310.5px;width:22.5px;height:22.5px;background:#3a3a3a;border:1px solid #5e5e5e;border-radius:3px;"></div>
<span class="t" style="left:1054.5px;top:344px;font-size:11.5px;color:#707070;letter-spacing:-0.31px;">Поиск в Adobe Stock</span>
<div class="a" style="left:1033px;top:360px;width:324px;height:1px;background:#626262;"></div>
<span class="t" style="left:1048.6px;top:381px;font-size:11px;color:#d4d4d4;letter-spacing:-0.17px;">Цветовые темы</span>
<div class="a" style="left:1036px;top:398px;width:205px;height:45px;background:#696969;"></div>
<div class="a" style="left:1038px;top:400px;width:40px;height:28px;background:#1f344f;"></div>
<div class="a" style="left:1078px;top:400px;width:40px;height:28px;background:#fd6363;"></div>
<div class="a" style="left:1118px;top:400px;width:41px;height:28px;background:#f6fafd;"></div>
<div class="a" style="left:1159px;top:400px;width:40px;height:28px;background:#69b4fe;"></div>
<div class="a" style="left:1199px;top:400px;width:40px;height:28px;background:#4881bb;"></div>
<span class="t" style="left:1040.3px;top:431px;font-size:10.5px;color:#f4f4f4;letter-spacing:0.12px;">Improved Flat UI - By Frank</span>
<div class="a" style="left:1351px;top:384px;width:12px;height:44px;background:#6b6b6b;"></div>
<svg style="left:0px;top:0px;" width="1366" height="768" viewBox="0 0 1366 768"><rect x="1349" y="286" width="10" height="1" fill="#c4c4c4"/><rect x="1349" y="288" width="10" height="1" fill="#c4c4c4"/><rect x="1349" y="290" width="10" height="1" fill="#c4c4c4"/><rect x="1349" y="292" width="10" height="1" fill="#c4c4c4"/><path d="M1288.2 320.4 L1291.6 323.8 L1295 320.4" fill="none" stroke="#c8c8c8" stroke-width="1.1"/><rect x="1314" y="316" width="5" height="5" fill="#e4e4e4"/><rect x="1320" y="316" width="5" height="5" fill="#e4e4e4"/><rect x="1314" y="322" width="5" height="5" fill="#e4e4e4"/><rect x="1320" y="322" width="5" height="5" fill="#e4e4e4"/><rect x="1339" y="316" width="11.4" height="2" fill="#e4e4e4"/><rect x="1339" y="319" width="11.4" height="2" fill="#e4e4e4"/><rect x="1339" y="322" width="11.4" height="2" fill="#e4e4e4"/><rect x="1339" y="325" width="11.4" height="2" fill="#e4e4e4"/><circle cx="1040.2" cy="349" r="3.2" fill="none" stroke="#d8d8d8" stroke-width="1.5"/><path d="M1037.8 351.6 L1034.6 354.6" stroke="#d8d8d8" stroke-width="2" stroke-linecap="round"/><path d="M1346.2 348.4 L1349.6 351.8 L1353 348.4" fill="none" stroke="#bdbdbd" stroke-width="1.1"/><path d="M1036.2 382.2 H1044 L1040.1 387.8 Z" fill="#d0d0d0"/><path d="M1353.8 379.8 L1357.4 376.4 L1361 379.8" fill="none" stroke="#6e6e6e" stroke-width="1"/><path d="M1353.8 433.4 L1357.4 436.8 L1361 433.4" fill="none" stroke="#6e6e6e" stroke-width="1"/><path d="M1043.4 452.8 V463.8 M1037.9 458.3 H1048.9" stroke="#e0e0e0" stroke-width="1.8" fill="none"/><path d="M1048.2 464.6 H1050.6 L1049.4 466 Z" fill="#cfcfcf"/><path d="M1068 452.6 L1073 457.6 H1070 V460.6 H1066 V457.6 H1063 Z" fill="#e0e0e0"/><rect x="1062.2" y="461.6" width="11.8" height="1.1" fill="#e0e0e0"/><rect x="1062.2" y="463.8" width="11.8" height="1.1" fill="#e0e0e0"/><g fill="none" stroke="#dedede" stroke-width="1.7"><circle cx="1311.8" cy="459.2" r="4.9"/><circle cx="1316.6" cy="457.8" r="5.1"/></g><path d="M1309.6 461.8 C1311.4 463 1313.6 462.4 1314.8 460.6 L1317.4 456.2" fill="none" stroke="#dedede" stroke-width="1.5"/><g fill="none" stroke="#d6c8ea" stroke-width="1.05"><path d="M1333.6 456.4 H1342.4 V464.8 H1333.6 Z M1332.2 456.2 H1343.4 M1335.8 455.8 V453.6 H1340 V455.8 M1335.9 458 V463.4 M1338 458 V463.4 M1340.1 458 V463.4"/></g></svg>

<div class="a" style="left:1026px;top:472px;width:340px;height:256px;background:#535353;"></div>
<div class="a" style="left:1026px;top:472px;width:340px;height:28px;background:#424242;"></div>
<div class="a" style="left:1026px;top:472px;width:43px;height:28px;background:#535353;"></div>
<div class="a" style="left:1069px;top:472px;width:1px;height:28px;background:#3a3a3a;"></div>
<div class="a" style="left:1124px;top:472px;width:1px;height:28px;background:#3a3a3a;"></div>
<div class="a" style="left:1186px;top:472px;width:1px;height:28px;background:#3a3a3a;"></div>
<span class="t" style="left:1035.3px;top:481px;font-size:10.5px;color:#f0f0f0;font-weight:bold;letter-spacing:-0.25px;transform:scaleX(0.9149);transform-origin:0 0;">Слои</span>
<span class="t" style="left:1078.4px;top:481px;font-size:10.5px;color:#a6a6a6;font-weight:bold;letter-spacing:-0.25px;transform:scaleX(0.9398);transform-origin:0 0;">Каналы</span>
<span class="t" style="left:1134.6px;top:481px;font-size:10.5px;color:#a6a6a6;font-weight:bold;letter-spacing:-0.25px;transform:scaleX(0.9558);transform-origin:0 0;">Контуры</span>
<div class="a" style="left:1030px;top:509.5px;width:124px;height:18.5px;background:#434343;border:1px solid #5c5c5c;border-radius:3px;"></div>
<span class="t" style="left:1052px;top:513px;font-size:10.5px;color:#efefef;letter-spacing:-0.25px;transform:scaleX(0.9624);transform-origin:0 0;">Вид</span>
<div class="a" style="left:1026px;top:532px;width:340px;height:1px;background:#464646;"></div>
<div class="a" style="left:1030px;top:536.5px;width:189.5px;height:18.5px;background:#434343;border:1px solid #5c5c5c;border-radius:3px;"></div>
<span class="t" style="left:1038.4px;top:540px;font-size:10.5px;color:#efefef;letter-spacing:-0.21px;">Пропустить</span>
<span class="t" style="left:1226.3px;top:540px;font-size:10.5px;color:#d2d2d2;letter-spacing:-0.29px;">Непрозрачность:</span>
<div class="a" style="left:1309.5px;top:536.5px;width:52.5px;height:18px;background:#434343;border:1px solid #5c5c5c;border-radius:2px;"></div>
<div class="a" style="left:1345px;top:537px;width:1px;height:17px;background:#5c5c5c;"></div>
<span class="t" style="left:1314.3px;top:540px;font-size:10.5px;color:#f2f2f2;letter-spacing:-0.25px;transform:scaleX(0.9577);transform-origin:0 0;">100%</span>
<div class="a" style="left:1026px;top:559px;width:340px;height:1px;background:#464646;"></div>
<span class="t" style="left:1032px;top:567px;font-size:10.5px;color:#cfcfcf;letter-spacing:-0.20px;">Закрепить:</span>
<span class="t" style="left:1265px;top:567px;font-size:10.5px;color:#d2d2d2;letter-spacing:-0.25px;transform:scaleX(0.9547);transform-origin:0 0;">Заливка:</span>
<div class="a" style="left:1309.5px;top:563.5px;width:52.5px;height:18px;background:#434343;border:1px solid #5c5c5c;border-radius:2px;"></div>
<div class="a" style="left:1345px;top:564px;width:1px;height:17px;background:#5c5c5c;"></div>
<span class="t" style="left:1314.3px;top:567px;font-size:10.5px;color:#f2f2f2;letter-spacing:-0.25px;transform:scaleX(0.9577);transform-origin:0 0;">100%</span>
<div class="a" style="left:1026px;top:587px;width:338px;height:1px;background:#3e3e3e;"></div>
<div class="a" style="left:1350.5px;top:588px;width:13.5px;height:114px;background:#4a4a4a;"></div>
<div class="a" style="left:1056px;top:588px;width:1px;height:100px;background:#464646;"></div>
<div class="a" style="left:1057px;top:588px;width:293.5px;height:22px;background:#696969;"></div>
<div class="a" style="left:1026px;top:610px;width:324.5px;height:1px;background:#474747;"></div>
<div class="a" style="left:1057px;top:611px;width:282px;height:39px;background:#696969;"></div>
<div class="a" style="left:1339px;top:611px;width:11.5px;height:39px;background:#5c5c5c;"></div>
<div class="a" style="left:1057px;top:650px;width:293.5px;height:38px;background:#4c4c4c;"></div>
<div class="a" style="left:1026px;top:688px;width:324.5px;height:1px;background:#484848;"></div>
<div class="a" style="left:1026px;top:702px;width:340px;height:1px;background:#464646;"></div>
<div class="a" style="left:1060px;top:614px;width:32px;height:32px;background:#2f5d80;border:1px solid #1e1e1e;"></div>
<span class="t" style="left:1099.3px;top:595px;font-size:10.5px;color:#f0f0f0;letter-spacing:-0.15px;">Группа 2</span>
<span class="t" style="left:1101.8px;top:626px;font-size:10.5px;color:#f0f0f0;letter-spacing:-0.25px;transform:scaleX(0.9564);transform-origin:0 0;">Слой 0</span>
<span class="t" style="left:1095px;top:653px;font-size:10.5px;color:#ececec;letter-spacing:-0.25px;transform:scaleX(0.9582);transform-origin:0 0;">Эффекты</span>
<span class="t" style="left:1112.6px;top:672px;font-size:10.5px;color:#ececec;letter-spacing:-0.25px;transform:scaleX(0.9701);transform-origin:0 0;">Наложение цвета</span>
<span class="t" style="left:1323.8px;top:623px;font-size:14px;color:#e2e2e2;font-style:italic;letter-spacing:0.11px;">fx</span>
<span class="t" style="left:1190.6px;top:708px;font-size:14.5px;color:#8a8a8a;font-style:italic;letter-spacing:0.32px;">fx</span>
<svg style="left:0px;top:0px;" width="1366" height="768" viewBox="0 0 1366 768"><rect x="1349" y="483" width="10" height="1" fill="#c4c4c4"/><rect x="1349" y="485" width="10" height="1" fill="#c4c4c4"/><rect x="1349" y="487" width="10" height="1" fill="#c4c4c4"/><rect x="1349" y="489" width="10" height="1" fill="#c4c4c4"/><rect x="1365" y="29" width="1" height="46" fill="#3c3c3c"/><rect x="1364" y="75" width="2" height="653" fill="#3e3e3e"/><circle cx="1043.6" cy="517.2" r="3.2" fill="none" stroke="#d8d8d8" stroke-width="1.4"/><path d="M1041.2 519.8 L1038.4 522.6" stroke="#d8d8d8" stroke-width="1.9" stroke-linecap="round"/><path d="M1143 517.4 L1146.5 521.0 L1150 517.4" fill="none" stroke="#c8c8c8" stroke-width="1.1"/><path d="M1209.3 544.4 L1212.8 548.0 L1216.3 544.4" fill="none" stroke="#c8c8c8" stroke-width="1.1"/><path d="M1350 544.4 L1353.5 548.0 L1357 544.4" fill="none" stroke="#c8c8c8" stroke-width="1.1"/><path d="M1350 571.4 L1353.5 575.0 L1357 571.4" fill="none" stroke="#c8c8c8" stroke-width="1.1"/><rect x="1198.6" y="513.5" width="11" height="9" fill="none" stroke="#dedede" stroke-width="1.1"/><path d="M1200.2 521 L1203 517.4 L1204.8 519.4 L1206.2 518 L1208.2 521 Z" fill="#dedede"/><circle cx="1228.4" cy="518.5" r="5.1" fill="none" stroke="#dedede" stroke-width="1.2"/><path d="M1232 514.9 A5.1 5.1 0 0 1 1224.8 522.1 Z" fill="#dedede"/><path d="M1247.8 513.6 H1258 V516.8 H1257 L1256.4 515 H1254 V522 L1255.6 522.3 V523.4 H1250.2 V522.3 L1251.8 522 V515 H1249.4 L1248.8 516.8 H1247.8 Z" fill="#dedede"/><rect x="1272.6" y="514.6" width="8" height="8" fill="none" stroke="#dedede" stroke-width="1.1"/><rect x="1271" y="513" width="3" height="3" fill="#535353" stroke="#dedede" stroke-width="0.9"/><rect x="1279.4" y="513" width="3" height="3" fill="#535353" stroke="#dedede" stroke-width="0.9"/><rect x="1271" y="521.4" width="3" height="3" fill="#535353" stroke="#dedede" stroke-width="0.9"/><rect x="1279.4" y="521.4" width="3" height="3" fill="#535353" stroke="#dedede" stroke-width="0.9"/><path d="M1299.6 517.4 V513.4 H1303.4 L1306 516 V523.6 H1302.4 M1303.2 513.6 V516.2 H1305.8" fill="none" stroke="#dedede" stroke-width="1.1"/><rect x="1296.2" y="518" width="5.6" height="6.2" fill="#dedede"/><rect x="1353" y="510.4" width="8.6" height="17.2" rx="4.3" fill="#444" stroke="#5e5e5e" stroke-width="0.8"/><circle cx="1357.3" cy="514.4" r="3.9" fill="#e2e2e2"/><rect x="1093.4" y="567.2" width="10.4" height="10.4" fill="none" stroke="#a8a8a8" stroke-width="1"/><rect x="1094" y="567.8" width="3.1" height="3.1" fill="#a0a0a0"/><rect x="1100.2" y="567.8" width="3.1" height="3.1" fill="#a0a0a0"/><rect x="1097.1" y="570.9" width="3.1" height="3.1" fill="#a0a0a0"/><rect x="1094" y="574" width="3.1" height="3.1" fill="#a0a0a0"/><rect x="1100.2" y="574" width="3.1" height="3.1" fill="#a0a0a0"/><path d="M1127 566.8 C1123.6 569 1121 571.6 1119 574.2 L1121.2 576 C1123.8 573.2 1126 570.4 1127 566.8 Z" fill="#8a8a8a"/><path d="M1118.6 574.8 C1116.4 574.2 1115.2 576 1114.8 579.6 C1117.8 580 1120.4 579 1120.8 576.6 Z" fill="#8a8a8a"/><path transform="translate(1136.4,566.8) scale(0.76)" d="M8.5 0.5 L11.5 4 H9.2 V7.8 H13 V5.5 L16.5 8.5 L13 11.5 V9.2 H9.2 V13 H11.5 L8.5 16.5 L5.5 13 H7.8 V9.2 H4 V11.5 L0.5 8.5 L4 5.5 V7.8 H7.8 V4 H5.5 Z" fill="#8a8a8a"/><path d="M1160.6 566.6 V579.6 M1158 569.4 H1171.8 M1169.2 566.6 V568 M1169.2 577 V579.6 M1158 577 H1171.8" fill="none" stroke="#dedede" stroke-width="1.1" stroke-dasharray="none"/><path d="M1160.6 569.4 H1166.2 L1169.2 572.4 V577 H1160.6 Z" fill="none" stroke="#dedede" stroke-width="1.3"/><rect x="1182" y="572" width="10.4" height="6.8" rx="0.8" fill="#f0f0f0"/><path d="M1184.4 572 V570.4 C1184.4 568.6 1185.6 567.8 1187.2 567.8 C1188.8 567.8 1190 568.6 1190 570.4 V572" fill="none" stroke="#f0f0f0" stroke-width="1.5"/><circle cx="1187.2" cy="575.2" r="1" fill="#535353"/><path d="M1034.8 599.6 C1037.6 594.2 1045.6 594.2 1048.3999999999999 599.6 C1045.6 604.8000000000001 1037.6 604.8000000000001 1034.8 599.6 Z" fill="#e8e8e8"/><circle cx="1041.6" cy="599.5" r="2.5" fill="#3a3a3a"/><circle cx="1042.6" cy="598.5" r="0.9" fill="#e8e8e8"/><path d="M1034.8 630.9 C1037.6 625.5 1045.6 625.5 1048.3999999999999 630.9 C1045.6 636.1 1037.6 636.1 1034.8 630.9 Z" fill="#e8e8e8"/><circle cx="1041.6" cy="630.8" r="2.5" fill="#3a3a3a"/><circle cx="1042.6" cy="629.8" r="0.9" fill="#e8e8e8"/><path d="M1075.8 659.3 C1078.6 653.9 1086.6 653.9 1089.3999999999999 659.3 C1086.6 664.5 1078.6 664.5 1075.8 659.3 Z" fill="#e8e8e8"/><circle cx="1082.6" cy="659.1999999999999" r="2.5" fill="#3a3a3a"/><circle cx="1083.6" cy="658.1999999999999" r="0.9" fill="#e8e8e8"/><path d="M1092.7 678.5 C1095.5 673.1 1103.5 673.1 1106.3 678.5 C1103.5 683.7 1095.5 683.7 1092.7 678.5 Z" fill="#e8e8e8"/><circle cx="1099.5" cy="678.4" r="2.5" fill="#3a3a3a"/><circle cx="1100.5" cy="677.4" r="0.9" fill="#e8e8e8"/><path d="M1061.2 595.2 L1064.6 599.6 L1061.2 604" fill="none" stroke="#cfcfcf" stroke-width="1.1"/><path d="M1071.8 593.2 H1077 L1078 594.6 H1086.2 V604 H1071.8 Z" fill="#e4e4e4"/><path d="M1341.4 631.8 L1344.8 628.2 L1348.2 631.8" fill="none" stroke="#d8d8d8" stroke-width="1.1"/><g fill="none" stroke="#dedede" stroke-width="1.3"><path d="M1167.4 711.6 H1165.6 C1163.4 711.6 1162.4 713 1162.4 714.7 C1162.4 716.4 1163.4 717.8 1165.6 717.8 H1167.4 M1170.4 711.6 H1172.2 C1174.4 711.6 1175.4 713 1175.4 714.7 C1175.4 716.4 1174.4 717.8 1172.2 717.8 H1170.4 M1165.8 714.7 H1172"/></g><rect x="1216" y="709.6" width="13" height="9.2" fill="#8a8a8a"/><circle cx="1222.5" cy="714.2" r="2.6" fill="#5a5a5a"/><circle cx="1250.5" cy="714.8" r="5.2" fill="none" stroke="#dedede" stroke-width="1.2"/><path d="M1254.2 711.1 A5.2 5.2 0 0 1 1246.8 718.5 Z" fill="#dedede"/><path d="M1257.8 723 H1261.2 L1259.5 725 Z" fill="#e8e8e8"/><path d="M1271 709.2 H1276.4 L1277.4 710.8 H1283.4 V719.2 H1271 Z" fill="#dedede"/><path d="M1299.4 710.4 H1308.6 V719.6 H1303.2 L1299.4 715.8 Z M1299.4 715.8 H1303.2 V719.6" fill="none" stroke="#dedede" stroke-width="1.3"/><g fill="none" stroke="#8a8a8a" stroke-width="1.05"><path d="M1326.4 712.4 H1334.6 V720.8 H1326.4 Z M1325 712.2 H1336 M1328.6 711.8 V709.6 H1332.4 V711.8 M1328.5 714.2 V719.2 M1330.5 714.2 V719.2 M1332.5 714.2 V719.2"/></g></svg>

<div class="a" style="left:0px;top:727px;width:40px;height:24px;background:#0b0b0b;"></div>
<div class="a" style="left:48px;top:727px;width:344px;height:41px;background:#343434;"></div>
<div class="a" style="left:835px;top:728px;width:48px;height:40px;background:#3d3d3d;"></div>
<div class="a" style="left:884px;top:728px;width:230px;height:40px;background:transparent;background:linear-gradient(115deg,rgba(0,0,0,0) 8%,rgba(60,60,56,.38) 12%,rgba(50,50,46,.25) 18%,rgba(0,0,0,0) 22%,rgba(0,0,0,0) 30%,rgba(62,36,18,.42) 40%,rgba(30,18,10,.1) 47%,rgba(60,34,16,.38) 54%,rgba(40,22,10,.2) 64%,rgba(0,0,0,0) 78%);"></div>
<span class="t" style="left:56.8px;top:741px;font-size:15px;color:#a9a9a9;letter-spacing:0.02px;">Поиск в Windows</span>
<div class="a" style="left:496px;top:766px;width:39px;height:2px;background:#a6d160;"></div>
<div class="a" style="left:643px;top:766px;width:39px;height:2px;background:#a6d160;"></div>
<div class="a" style="left:741px;top:766px;width:40px;height:2px;background:#a6d160;"></div>
<div class="a" style="left:790px;top:766px;width:40px;height:2px;background:#a6d160;"></div>
<div class="a" style="left:835px;top:766px;width:48px;height:2px;background:#b2dc6a;"></div>
<div class="a" style="left:530px;top:766px;width:5px;height:2px;background:#7da046;"></div>
<svg style="left:0px;top:0px;" width="1366" height="768" viewBox="0 0 1366 768"><path d="M15.8 742.2 L22.6 741.2 V747.6 H15.8 Z M23.6 741 L32.2 739.8 V747.6 H23.6 Z M15.8 748.6 H22.6 V755 L15.8 754 Z M23.6 748.6 H32.2 V756.2 L23.6 755.2 Z" fill="#ffffff"/><rect x="12" y="734" width="10" height="9" fill="none" stroke="#222" stroke-width="1"/><rect x="17" y="729" width="10" height="9" fill="none" stroke="#222" stroke-width="1"/><rect x="410.6" y="741.8" width="11" height="12.4" fill="none" stroke="#ffffff" stroke-width="1.5"/><path d="M407.8 743.8 H406.2 V752.2 H407.8 M424.4 743.8 H426 V752.2 H424.4" fill="none" stroke="#ffffff" stroke-width="1.3"/><path d="M457.4 748.4 C457.6 741.6 462 737.2 467.6 737.2 C473.6 737.2 477 741.4 477 746.6 V749 H463.8 C464 752 466.4 753.6 469.6 753.6 C472 753.6 474.2 753 476 751.8 V756 C474 757.2 471.6 757.8 468.6 757.8 C462.4 757.8 458.8 753.8 458.8 748.6 C458.8 745.4 460.4 742.6 463 741 C460.4 742.2 458.4 744.8 457.4 748.4 Z M463.9 745.4 H471.4 C471.4 743 470 741.4 467.8 741.4 C465.6 741.4 464.2 743 463.9 745.4 Z" fill="#1b82da"/><path d="M505.4 740 H512 L513.4 741.6 H526.6 V756.6 H505.4 Z" fill="#f7d46e"/><rect x="505.4" y="743" width="21.2" height="2.2" fill="#e8b94a"/><path d="M508.6 748.6 H523.4 V756.6 H519.6 V753 H512.4 V756.6 H508.6 Z" fill="#3aa0e8"/><rect x="505.4" y="740" width="6.4" height="1.4" fill="#e8b94a"/><path d="M554.4 741.6 L575.4 739.6 V758.8 L554.4 756.4 Z" fill="#ffffff"/><path d="M560 741 C560 737.4 562 735.6 564.6 735.6 C567.2 735.6 569 737.2 569 740.2" fill="none" stroke="#ffffff" stroke-width="1.3"/><path d="M559 745.4 L563.6 745 V749 H559 Z M564.8 744.8 L570.4 744.2 V749 H564.8 Z M559 750.2 H563.6 V754.2 L559 753.8 Z M564.8 750.2 H570.4 V755 L564.8 754.4 Z" fill="#17160f"/><path d="M601.6 744.8 L613.2 737.8 L624.8 744.8 V756.8 H601.6 Z" fill="#ffffff"/><path d="M602.6 745.6 L613.2 752 L623.8 745.6" fill="none" stroke="#17160f" stroke-width="1.2"/><circle cx="626.4" cy="755" r="8.6" fill="#3b3b3b" stroke="#8e8e8e" stroke-width="1.2"/><circle cx="662.6" cy="748.4" r="11.4" fill="#f0f0f0"/><path d="M657 741.4 L662.8 749.2 V756.4 M668.6 741.4 L662.8 749.2" fill="none" stroke="#e8221c" stroke-width="2.6"/><rect x="700.6" y="736.2" width="23" height="23.2" fill="#b30a10"/><rect x="701.6" y="737.2" width="21" height="21.2" fill="none" stroke="#8c0608" stroke-width="1"/><path d="M755 746.8 L766.8 738.4 L769.4 739.8 L769.6 753 L765.2 755.6 L755 749.4 Z" fill="#ffffff"/><path d="M766.8 738.4 L769.4 739.8 L769.5 744 Z" fill="#9a9a9a"/><path d="M755 748 L763.2 747.6 L768.4 738.8 M763.2 747.6 L767.4 755" fill="none" stroke="#17160f" stroke-width="1.7"/><path d="M799 748 C798.6 741.6 804 737.4 809.4 738.4 C812.6 739 815 740.8 818.8 737.8 C821 742 820.8 750 816.2 754 C811.6 757.6 805.4 756.6 802.8 753.8 L800.4 756.4 L799.4 751.6 Z" fill="#8db1e4" stroke="#10294a" stroke-width="0.8"/><path d="M803 744 C806 739.6 813 740.4 815.2 745 C816.8 749.2 813.4 753 809.4 752 C806.4 751 805.8 747.4 808.2 746 C810 745.2 811.6 746.6 811 748.2" fill="none" stroke="#dbe8fa" stroke-width="1.7"/><path d="M801.4 749 C802 753 806 755.4 810 754.8 M817.8 742 C818.8 745 818.4 749 816 752" fill="none" stroke="#5f88cc" stroke-width="1.3"/><rect x="849.2" y="737.6" width="19.8" height="19" fill="#0b1f2e" stroke="#2bc6ff" stroke-width="1.5"/><path d="M928.6 751 V747.6 C928.6 743.4 931.4 741 935 741 C938.6 741 941.4 743.4 941.4 747.6 V751" fill="none" stroke="#f59b23" stroke-width="2.2"/><rect x="928.2" y="748.2" width="4" height="7.2" rx="1.4" fill="#f59b23"/><rect x="937.8" y="748.2" width="4" height="7.2" rx="1.4" fill="#f59b23"/><path d="M957.6 744.6 C955.2 744.2 953.2 745.8 953.2 748 C953.2 750.2 955 751.6 957 751.2 M958.4 748 C957.4 747.4 956.4 748 956.4 749" fill="none" stroke="#f2f2f2" stroke-width="1.2"/><path d="M956.6 744.4 C958.8 742.6 962 742.8 963.6 744.6" fill="none" stroke="#f2f2f2" stroke-width="1.1"/><circle cx="962.4" cy="749.6" r="4.2" fill="#ea4a1f"/><circle cx="983" cy="748" r="8.3" fill="#f59b23"/><path d="M984.8 741.8 L979.6 749 H982.8 L981.2 754.4 L986.6 746.8 H983.4 Z" fill="#2a1c0c"/><circle cx="1007.2" cy="748" r="7.4" fill="#8e8e8e" stroke="#d8d8d8" stroke-width="1.6"/><circle cx="1007.2" cy="744.4" r="2" fill="#f4f4f4"/><circle cx="1004" cy="750" r="2" fill="#f4f4f4"/><circle cx="1010.4" cy="750" r="2" fill="#f4f4f4"/><circle cx="1031" cy="748" r="7.6" fill="#5a5a5a" stroke="#b9b9b9" stroke-width="1.6"/><path d="M1026 751 C1028 746 1032 743.6 1036.6 744.6 C1035 748.6 1031 751.6 1026 751 Z" fill="#d4261c"/><path d="M1055 740.4 L1062 742.4 V748 C1062 752 1059 754.6 1055 756 C1051 754.6 1048 752 1048 748 V742.4 Z" fill="#f6f6f6"/><path d="M1055 740.4 V756 M1048 747.6 H1062" stroke="#17160f" stroke-width="1.3"/><circle cx="1059.6" cy="753" r="3.9" fill="#1d9d4f"/><path d="M1057.6 753 L1059.2 754.6 L1061.8 751.6" fill="none" stroke="#fff" stroke-width="1.1"/><circle cx="1078.6" cy="747.6" r="7.8" fill="#d9cf45"/><path d="M1071.6 750.6 C1075 749 1079 749.6 1082 753.6 C1078.6 756.2 1074 755.4 1071.6 750.6 Z" fill="#4ea53c"/><path d="M1077.8 743.4 V748.6 M1075.2 746 H1080.4" stroke="#3f9a34" stroke-width="1.8"/><circle cx="1083" cy="753" r="4" fill="#e03a24"/><rect x="1082.5" y="750.4" width="1.1" height="3.4" fill="#fff"/><rect x="1082.5" y="754.6" width="1.1" height="1.1" fill="#fff"/><rect x="1096.4" y="741" width="14.4" height="11" fill="#9c9c9c"/><rect x="1096" y="753.4" width="6.4" height="1.8" fill="#f0f0f0"/><rect x="1104.6" y="753.4" width="6.4" height="1.8" fill="#f0f0f0"/><ellipse cx="1126.8" cy="748" rx="5.6" ry="8.4" fill="#1560b8"/><path d="M1123.8 744.6 L1129.6 750.6 L1126.8 753.4 V742.6 L1129.6 745.4 L1123.8 751.4" fill="none" stroke="#fff" stroke-width="1.2"/><rect x="1148.6" y="744.4" width="9.4" height="6.6" fill="none" stroke="#ffffff" stroke-width="1.1"/><rect x="1158.4" y="746.2" width="1.2" height="3" fill="#ffffff"/><rect x="1149.6" y="745.4" width="3.6" height="4.6" fill="#ffffff"/><path d="M1144 742.4 V744.4 M1146.6 742.4 V744.4 M1143.2 744.6 H1147.4 V746.6 C1147.4 747.8 1146.6 748.4 1145.3 748.4 C1144 748.4 1143.2 747.8 1143.2 746.6 Z M1145.3 748.4 V750 C1145.3 751 1146 751.4 1147 751.4 H1148.4" fill="none" stroke="#ffffff" stroke-width="1"/><circle cx="1180.4" cy="753.4" r="1.5" fill="#ffffff"/><path d="M1176.6 753.8 A4 4 0 0 1 1180.6 749.8" fill="none" stroke="#ffffff" stroke-width="1.3"/><path d="M1173.6 753.8 A7 7 0 0 1 1180.6 746.8" fill="none" stroke="#8a8a8a" stroke-width="1.2"/><path d="M1170.6 753.8 A10 10 0 0 1 1180.6 743.8" fill="none" stroke="#8a8a8a" stroke-width="1.2"/><path d="M1191.2 746 H1193.8 L1197.4 742.6 V753.4 L1193.8 750 H1191.2 Z" fill="none" stroke="#ffffff" stroke-width="1.1" stroke-linejoin="round"/><path d="M1199.6 745.6 A3.4 3.4 0 0 1 1199.6 750.4 M1201.8 743.8 A6 6 0 0 1 1201.8 752.2" fill="none" stroke="#ffffff" stroke-width="1"/><path d="M1204 742 A8.6 8.6 0 0 1 1204 754" fill="none" stroke="#9a9a9a" stroke-width="1"/><path d="M1325.2 739.8 H1341.2 V751.4 H1331.6 L1328.4 754.4 V751.4 H1325.2 Z" fill="#ffffff"/><path d="M1328 743 H1338.4 M1328 745.6 H1338.4 M1328 748.2 H1335" stroke="#17160f" stroke-width="1"/><circle cx="1340.8" cy="755.2" r="7.4" fill="#3a3a3a" stroke="#8c8c8c" stroke-width="1.1"/></svg>
<span class="t" style="left:619.4px;top:749px;font-size:11.5px;color:#ffffff;font-weight:bold;letter-spacing:0.81px;">56</span>
<span class="t" style="left:703.6px;top:741px;font-size:17px;color:#ffffff;font-weight:bold;font-style:italic;letter-spacing:-0.25px;transform:scaleX(0.9123);transform-origin:0 0;">Fz</span>
<span class="t" style="left:852.4px;top:742px;font-size:12.5px;color:#2bc6ff;font-weight:bold;letter-spacing:-0.25px;transform:scaleX(0.8910);transform-origin:0 0;">Ps</span>
<span class="t" style="left:1217.4px;top:741px;font-size:12.5px;color:#ffffff;letter-spacing:-0.25px;transform:scaleX(0.8500);transform-origin:0 0;">ENG</span>
<span class="t" style="left:1266.6px;top:733px;font-size:12px;color:#ffffff;letter-spacing:-0.25px;transform:scaleX(0.8750);transform-origin:0 0;">18:51</span>
<span class="t" style="left:1254px;top:751px;font-size:12px;color:#ffffff;letter-spacing:-0.25px;transform:scaleX(0.9168);transform-origin:0 0;">18.10.2017</span>
<span class="t" style="left:1338px;top:750px;font-size:11.5px;color:#ffffff;font-weight:bold;">1</span>

</div>
</body>
</html>
